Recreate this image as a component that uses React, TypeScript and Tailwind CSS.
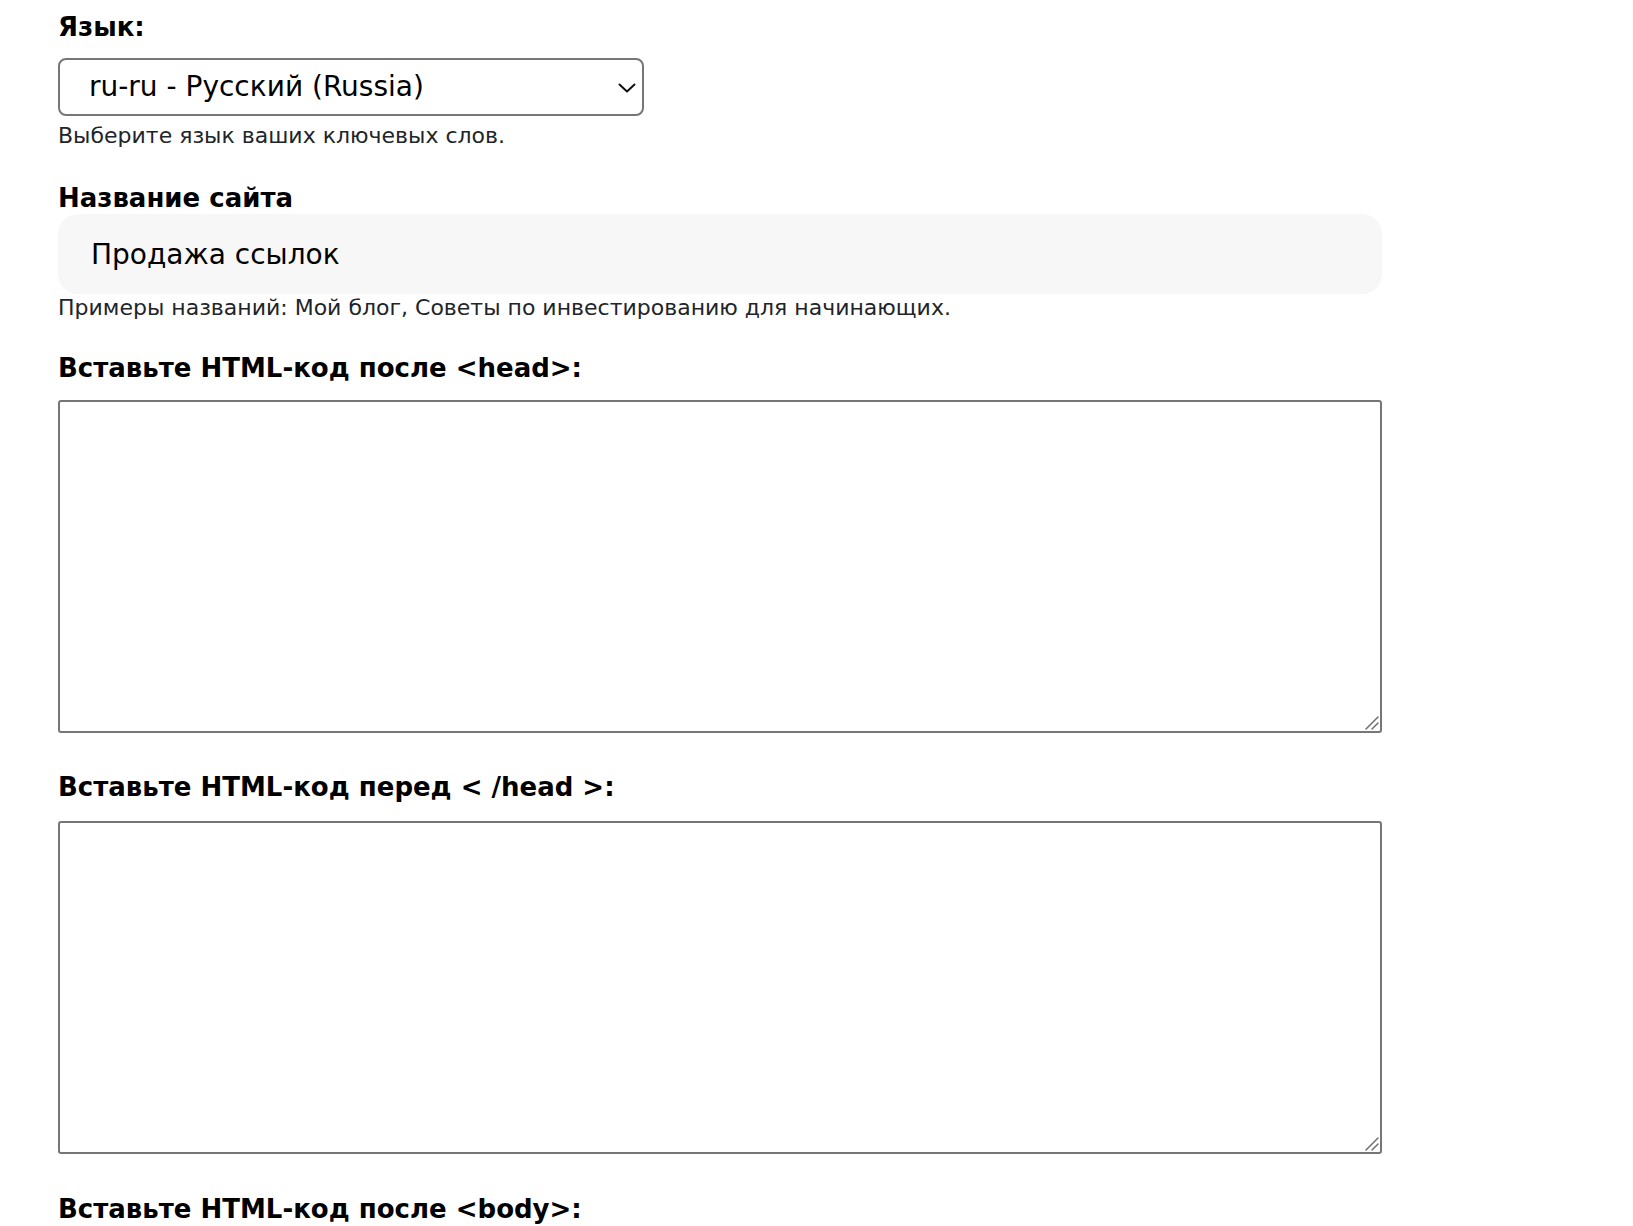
import { useState } from "react";

const fontStack = "font-['DejaVu_Sans',sans-serif]";

function Label({ children }: { children: React.ReactNode }) {
  return <label className="block text-[26px] font-bold leading-[32px] text-black">{children}</label>;
}

function Hint({ children }: { children: React.ReactNode }) {
  return <p className="text-[22px] leading-[28px] text-[#212529]">{children}</p>;
}

function CodeArea() {
  return (
    <div className="relative">
      <textarea className="block h-[333px] w-full resize-none rounded-[3px] border-2 border-[#767676] bg-white p-3 text-[18px] outline-none" />
      <svg
        className="pointer-events-none absolute bottom-[3px] right-[3px]"
        width="14"
        height="14"
        viewBox="0 0 14 14"
        fill="none"
      >
        <path d="M13 1L1 13M13 7L7 13" stroke="#6f6f6f" strokeWidth="1.5" strokeLinecap="round" />
      </svg>
    </div>
  );
}

export default function App() {
  const [lang, setLang] = useState("ru-ru");
  const [siteName, setSiteName] = useState("Продажа ссылок");

  return (
    <div className={`min-h-screen bg-white ${fontStack}`}>
      <div className="w-[1382px] pl-[58px] pt-[11px]">
        <Label>Язык:</Label>
        <div className="relative mt-[15px] w-[586px]">
          <select
            value={lang}
            onChange={(e) => setLang(e.target.value)}
            className="h-[58px] w-full appearance-none rounded-[8px] border-2 border-[#767676] bg-white pl-[29px] pr-10 text-[28px] text-black outline-none"
          >
            <option value="ru-ru">ru-ru - Русский (Russia)</option>
            <option value="en-us">en-us - English (United States)</option>
          </select>
          <svg
            className="pointer-events-none absolute right-[8px] top-[25px]"
            width="18"
            height="10"
            viewBox="0 0 18 10"
            fill="none"
          >
            <path d="M1.5 1.5L9 8.5L16.5 1.5" stroke="#111" strokeWidth="2" strokeLinecap="round" strokeLinejoin="round" />
          </svg>
        </div>
        <div className="mt-[6px]">
          <Hint>Выберите язык ваших ключевых слов.</Hint>
        </div>

        <div className="mt-[32px]">
          <Label>Название сайта</Label>
          <input
            value={siteName}
            onChange={(e) => setSiteName(e.target.value)}
            className="h-[80px] w-full rounded-[20px] bg-[#f7f7f7] pl-[33px] text-[28px] text-black outline-none"
          />
          <Hint>Примеры названий: Мой блог, Советы по инвестированию для начинающих.</Hint>
        </div>

        <div className="mt-[30px]">
          <Label>Вставьте HTML-код после &lt;head&gt;:</Label>
          <div className="mt-[16px]">
            <CodeArea />
          </div>
        </div>

        <div className="mt-[38px]">
          <Label>Вставьте HTML-код перед &lt; /head &gt;:</Label>
          <div className="mt-[18px]">
            <CodeArea />
          </div>
        </div>

        <div className="mt-[39px]">
          <Label>Вставьте HTML-код после &lt;body&gt;:</Label>
          <div className="mt-[17px]">
            <CodeArea />
          </div>
        </div>
      </div>
    </div>
  );
}
